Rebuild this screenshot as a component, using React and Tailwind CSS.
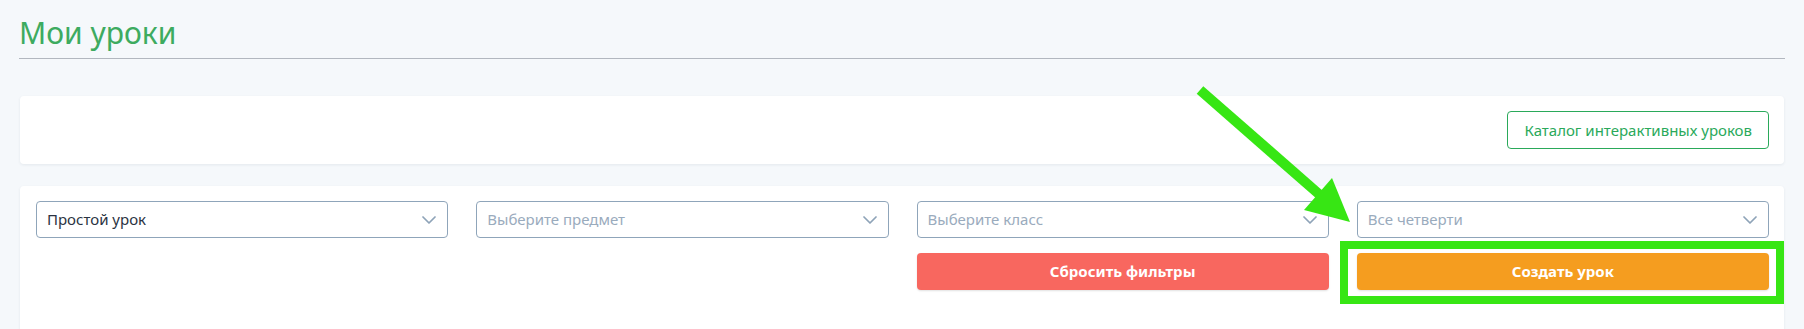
import React from 'react';

const font = { fontFamily: '"Noto Sans", "Open Sans", Arial, sans-serif' };

const Chevron = () => (
  <svg width="14" height="8" viewBox="0 0 14 8" fill="none" className="shrink-0">
    <path d="M1 1l6 6 6-6" stroke="#8ea3b8" strokeWidth="1.7" strokeLinecap="round" strokeLinejoin="round" />
  </svg>
);

const Select = ({ value, placeholder }) => (
  <div className="h-[37px] flex items-center justify-between pl-[10px] pr-[11px] border border-[#8fa5ba] rounded-[4px] bg-white">
    <span className={`text-[15px] ${value ? 'text-[#2b3342]' : 'text-[#9aabbd]'}`}>{value || placeholder}</span>
    <Chevron />
  </div>
);

const App = () => {
  return (
    <div className="relative min-h-[329px] bg-[#f5f8fb] px-[19px] overflow-hidden" style={font}>
      <div className="pt-[15px] pb-[7px] border-b border-[#b2b7bf]">
        <h1 className="text-[30px] leading-[36px] text-[#3dab60] font-normal">Мои уроки</h1>
      </div>

      <div className="mt-[37px] mx-px bg-white rounded-[4px] shadow-[0_1px_3px_rgba(30,50,80,0.08)] p-[15px] flex justify-end">
        <button className="h-[38px] px-[16px] border border-[#2aa95a] rounded-[4px] text-[15px] text-[#2aa95a] bg-white">
          Каталог интерактивных уроков
        </button>
      </div>

      <div className="mt-[22px] mx-px bg-white rounded-[4px] shadow-[0_1px_3px_rgba(30,50,80,0.08)] pt-[15px] pl-[16px] pr-[15px] pb-[60px]">
        <div className="grid grid-cols-4 gap-x-[28px] gap-y-[15px]">
          <Select value="Простой урок" />
          <Select placeholder="Выберите предмет" />
          <Select placeholder="Выберите класс" />
          <Select placeholder="Все четверти" />
          <div />
          <div />
          <button className="h-[37px] rounded-[4px] bg-[#f8675f] text-white text-[15px] font-bold shadow-[0_1px_2px_rgba(0,0,0,0.12)]">
            Сбросить фильтры
          </button>
          <div className="relative">
            <button className="w-full h-[37px] rounded-[4px] bg-[#f59d1f] text-white text-[15px] font-bold shadow-[0_1px_2px_rgba(0,0,0,0.12)]">
              Создать урок
            </button>
            <div className="absolute -left-[17px] -right-[15px] -top-[12px] -bottom-[14px] border-[8px] border-[#37e614] pointer-events-none" />
          </div>
        </div>
      </div>

      <svg className="absolute left-[1190px] top-[80px] pointer-events-none" width="170" height="150" viewBox="0 0 170 150">
        <line x1="10" y1="10" x2="130" y2="115" stroke="#37e614" strokeWidth="10" />
        <polygon points="160,142 142,98 114,130" fill="#37e614" />
      </svg>
    </div>
  );
};

export default App;
